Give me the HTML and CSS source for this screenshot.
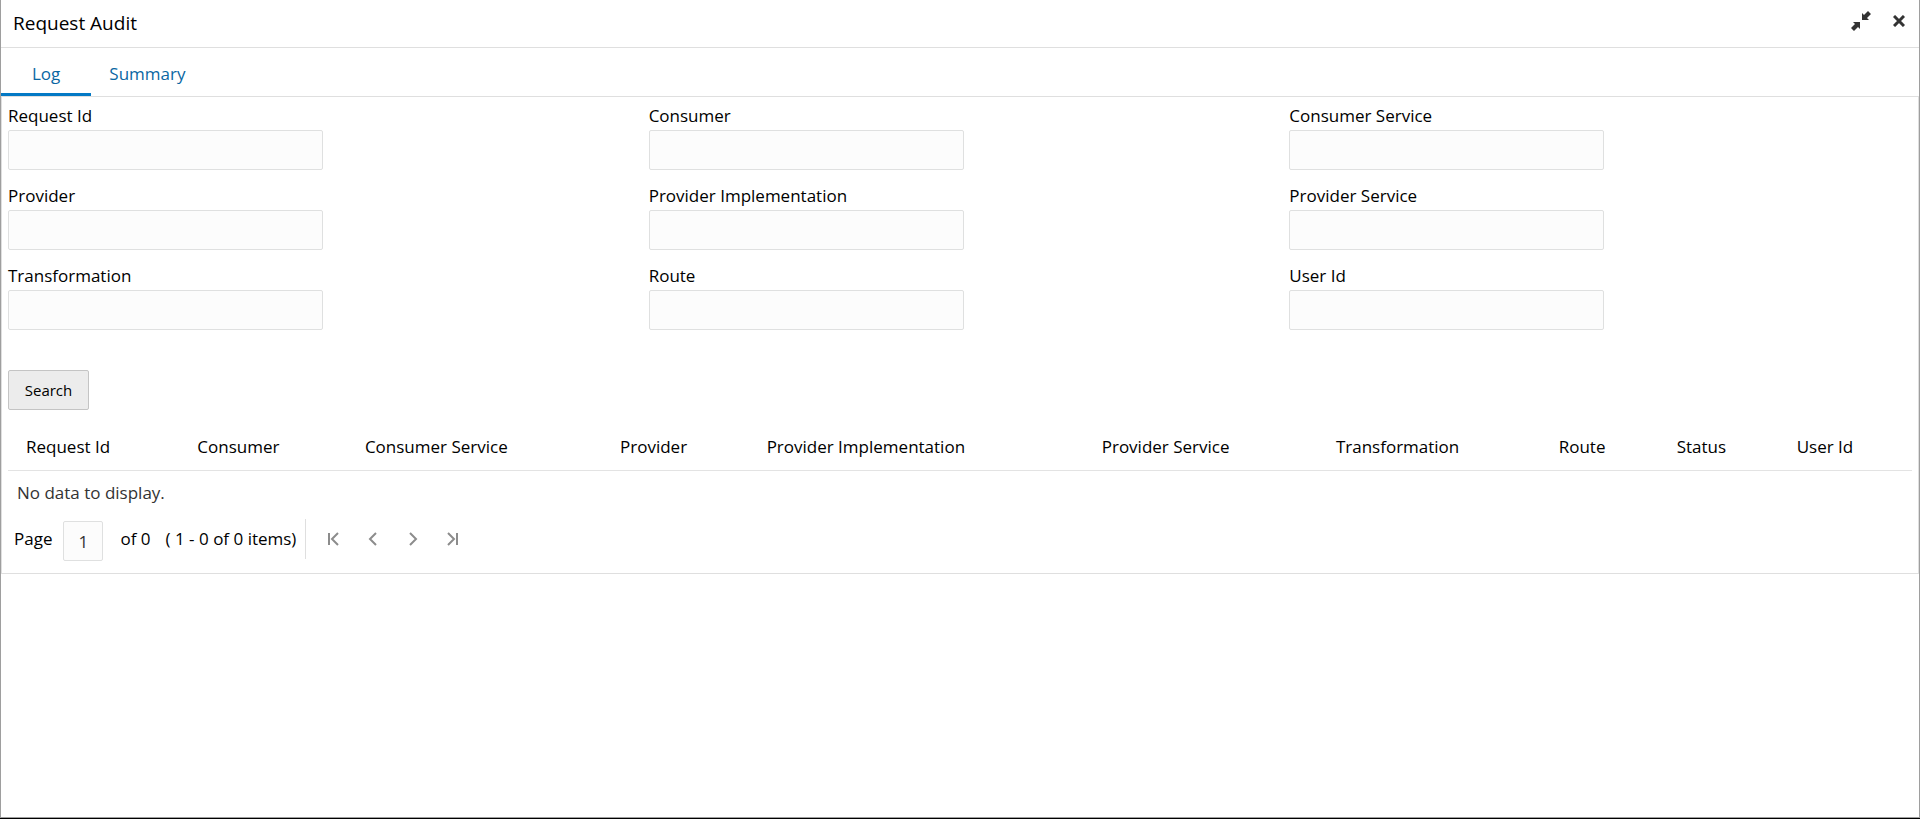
FILE: index.html
```
<!DOCTYPE html>
<html lang="en">
<head>
	<meta charset="UTF-8">
	<title>Request Audit</title>
	<link rel="stylesheet" href="styles.css">
</head>
<body>
	<div class="window">
		<header class="title-bar">
			<h1>Request Audit</h1>
			<div class="window-actions">
				<button type="button" aria-label="Collapse">
					<svg width="20" height="20" viewBox="0 0 20 20">
						<path d="M11 9V2l2 2 4-4 3 3-4 4 2 2z"/>
						<path d="M9 11v7l-2-2-4 4-3-3 4-4-2-2z"/>
					</svg>
				</button>
				<button type="button" aria-label="Close">
					<svg width="12" height="12" viewBox="0 0 12 12">
						<path class="cross" d="M1 1l10 10M11 1L1 11"/>
					</svg>
				</button>
			</div>
		</header>
		<nav class="tabs">
			<a href="#log" class="active">Log</a>
			<a href="#summary">Summary</a>
		</nav>
		<main class="panel" id="log">
			<form onsubmit="return false;">
				<div class="fields">
					<div class="field">
						<label for="request-id">Request Id</label>
						<input type="text" id="request-id">
					</div>
					<div class="field">
						<label for="consumer">Consumer</label>
						<input type="text" id="consumer">
					</div>
					<div class="field">
						<label for="consumer-service">Consumer Service</label>
						<input type="text" id="consumer-service">
					</div>
					<div class="field">
						<label for="provider">Provider</label>
						<input type="text" id="provider">
					</div>
					<div class="field">
						<label for="provider-implementation">Provider Implementation</label>
						<input type="text" id="provider-implementation">
					</div>
					<div class="field">
						<label for="provider-service">Provider Service</label>
						<input type="text" id="provider-service">
					</div>
					<div class="field">
						<label for="transformation">Transformation</label>
						<input type="text" id="transformation">
					</div>
					<div class="field">
						<label for="route">Route</label>
						<input type="text" id="route">
					</div>
					<div class="field">
						<label for="user-id">User Id</label>
						<input type="text" id="user-id">
					</div>
				</div>
				<button type="submit" class="search">Search</button>
			</form>
			<table>
				<colgroup>
					<col class="col-request">
					<col class="col-consumer">
					<col class="col-consumer-service">
					<col class="col-provider">
					<col class="col-implementation">
					<col class="col-provider-service">
					<col class="col-transformation">
					<col class="col-route">
					<col class="col-status">
					<col class="col-user">
				</colgroup>
				<thead>
					<tr>
						<th>Request Id</th>
						<th>Consumer</th>
						<th>Consumer Service</th>
						<th>Provider</th>
						<th>Provider Implementation</th>
						<th>Provider Service</th>
						<th>Transformation</th>
						<th>Route</th>
						<th>Status</th>
						<th>User Id</th>
					</tr>
				</thead>
				<tbody>
					<tr>
						<td colspan="10">No data to display.</td>
					</tr>
				</tbody>
			</table>
			<div class="pager">
				<label for="page">Page</label>
				<input type="text" id="page" value="1">
				<span class="page-count">of 0</span>
				<span class="item-count">( 1 - 0 of 0 items)</span>
				<div class="pager-nav">
					<button type="button" aria-label="First page">
						<svg width="12" height="14" viewBox="0 0 12 14"><path d="M2 1v12M11 1L5 7l6 6"/></svg>
					</button>
					<button type="button" aria-label="Previous page">
						<svg width="12" height="14" viewBox="0 0 12 14"><path d="M9 1L3 7l6 6"/></svg>
					</button>
					<button type="button" aria-label="Next page">
						<svg width="12" height="14" viewBox="0 0 12 14"><path d="M3 1l6 6-6 6"/></svg>
					</button>
					<button type="button" aria-label="Last page">
						<svg width="12" height="14" viewBox="0 0 12 14"><path d="M1 1l6 6-6 6M10 1v12"/></svg>
					</button>
				</div>
			</div>
		</main>
	</div>
</body>
</html>
```
FILE: styles.css
```
* {
	box-sizing: border-box;
	margin: 0;
	padding: 0;
}

body {
	font-family: 'Segoe UI', 'Open Sans', 'Noto Sans', sans-serif;
	font-size: 17px;
	line-height: 24px;
	color: #000;
	background-color: #fff;
	min-height: 100vh;
	display: flex;
	flex-direction: column;
	border-bottom: 1px solid #000;
}

.window {
	flex: 1;
	border: 1px solid #9e9e9e;
	border-top: none;
}

.title-bar {
	display: flex;
	align-items: center;
	justify-content: space-between;
	height: 48px;
	padding: 0 14px 2px 12px;
	border-bottom: 1px solid #dfdfdf;
}

h1 {
	font-size: 19px;
	font-weight: normal;
}

.window-actions {
	display: flex;
	align-items: center;
	gap: 22px;
	padding-bottom: 3px;
}

.window-actions button,
.pager-nav button {
	display: flex;
	align-items: center;
	justify-content: center;
	border: none;
	background: none;
	cursor: pointer;
}

.window-actions svg {
	fill: #333;
}

.window-actions .cross {
	fill: none;
	stroke: #333;
	stroke-width: 3;
}

.tabs {
	display: flex;
	height: 49px;
	border-bottom: 1px solid #dfdfdf;
}

.tabs a {
	display: flex;
	align-items: center;
	height: 48px;
	padding: 6px 18px 0;
	color: #0a67a3;
	text-decoration: none;
	border-bottom: 3px solid transparent;
}

.tabs .active {
	padding: 6px 31px 0;
	border-bottom-color: #0379c5;
}

.panel {
	border: 1px solid #dfdfdf;
	border-top: none;
	padding: 7px 6px 11px;
}

.fields {
	display: grid;
	grid-template-columns: repeat(3, 1fr);
	gap: 14px 18px;
}

.field label {
	display: block;
	height: 26px;
}

input {
	font: inherit;
	color: #333;
	height: 40px;
	background-color: #fcfcfc;
	border: 1px solid #dfe0e0;
	border-radius: 2px;
}

.field input {
	display: block;
	width: 50.6%;
	padding: 0 8px;
}

.search {
	font-family: inherit;
	font-size: 15px;
	width: 81px;
	height: 40px;
	margin-top: 40px;
	background-color: #ececec;
	border: 1px solid #c4c4c4;
	border-radius: 2px;
	cursor: pointer;
}

table {
	width: 100%;
	margin-top: 14px;
	border-collapse: collapse;
	table-layout: fixed;
}

.col-request { width: 9%; }
.col-consumer { width: 8.8%; }
.col-consumer-service { width: 13.4%; }
.col-provider { width: 7.7%; }
.col-implementation { width: 17.6%; }
.col-provider-service { width: 12.3%; }
.col-transformation { width: 11.7%; }
.col-route { width: 6.2%; }
.col-status { width: 6.3%; }
.col-user { width: 7%; }

th {
	height: 46px;
	padding: 0 18px;
	font-weight: normal;
	text-align: left;
	white-space: nowrap;
	border-bottom: 1px solid #e3e3e3;
}

td {
	height: 46px;
	padding: 0 9px;
	color: #333;
}

.pager {
	display: flex;
	align-items: center;
	padding-left: 6px;
	height: 46px;
}

.pager input {
	width: 40px;
	margin: 4px 17px 0 11px;
	text-align: center;
}

.item-count {
	margin-left: 15px;
}

.pager-nav {
	display: flex;
	height: 40px;
	margin-left: 9px;
	padding-left: 7px;
	border-left: 1px solid #dfdfdf;
}

.pager-nav button {
	width: 40px;
}

.pager-nav svg {
	fill: none;
	stroke: #8c8c8c;
	stroke-width: 2;
}
```
